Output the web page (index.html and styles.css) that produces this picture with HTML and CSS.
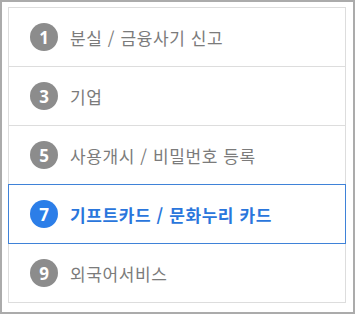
FILE: index.html
```html
<!DOCTYPE html>
<html lang="ko">
  <head>
    <meta charset="UTF-8" />
    <meta name="viewport" content="width=device-width, initial-scale=1.0" />
    <title>카드 메뉴</title>
    <link rel="stylesheet" href="styles.css">
  </head>
  <body>
    <div class="frame">
      <ul class="menu-list">
        <li class="menu-item">
          <span class="num">1</span>
          <span class="label">분실 / 금융사기 신고</span>
        </li>
        <li class="menu-item">
          <span class="num">3</span>
          <span class="label">기업</span>
        </li>
        <li class="menu-item">
          <span class="num">5</span>
          <span class="label">사용개시 / 비밀번호 등록</span>
        </li>
        <li class="menu-item active">
          <span class="num">7</span>
          <span class="label">기프트카드 / 문화누리 카드</span>
        </li>
        <li class="menu-item">
          <span class="num">9</span>
          <span class="label">외국어서비스</span>
        </li>
      </ul>
    </div>
  </body>
</html>
```

FILE: styles.css
```css
html,
body {
  margin: 0;
  padding: 0;
  background: #fff;
}
.frame {
  box-sizing: border-box;
  width: 355px;
  height: 314px;
  padding: 5px 7px 9px 6px;
  border: 2px solid #ababab;
}
.menu-list {
  list-style: none;
  margin: 0;
  padding: 0;
  border: 1px solid #dddddd;
}
.menu-item {
  display: flex;
  align-items: center;
  gap: 12px;
  height: 58px;
  padding-left: 21px;
  border-top: 1px solid #dddddd;
  font-family: "Noto Sans CJK KR", "Noto Sans", sans-serif;
  font-size: 17px;
  color: #7b7b7b;
}
.menu-item:first-child {
  border-top: 0;
}
.menu-item.active {
  margin: 0 -1px;
  padding-left: 21px;
  border: 1px solid #3f82d8;
  color: #2a76dc;
  font-weight: 700;
}
.menu-item.active + .menu-item {
  border-top: 0;
}
.num {
  display: flex;
  justify-content: center;
  align-items: center;
  flex: none;
  width: 28px;
  height: 28px;
  border-radius: 50%;
  background: #8c8c8c;
  color: #fff;
  font-family: "Noto Sans", sans-serif;
  font-size: 17px;
  font-weight: 700;
  line-height: 1;
}
.active .num {
  background: #2c7ee8;
}
.label {
  line-height: 1;
  letter-spacing: 0.6px;
}
```
